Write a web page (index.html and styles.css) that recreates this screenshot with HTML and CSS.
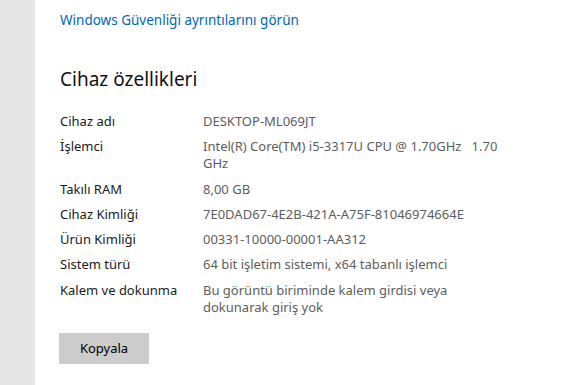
FILE: index.html
```html
<!DOCTYPE html>
<html lang="tr">
<head>
    <meta charset="UTF-8">
    <title>Hakkında</title>
    <link rel="stylesheet" href="styles.css">
</head>
<body>
    <div class="page">
        <div class="sidebar"></div>

        <main class="content">
            <a class="link" href="#">Windows Güvenliği ayrıntılarını görün</a>

            <h2>Cihaz özellikleri</h2>

            <dl class="specs">
                <dt>Cihaz adı</dt>
                <dd>DESKTOP-ML069JT</dd>
                <dt>İşlemci</dt>
                <dd>Intel(R) Core(TM) i5-3317U CPU @ 1.70GHz&nbsp;&nbsp; 1.70 GHz</dd>
                <dt>Takılı RAM</dt>
                <dd>8,00 GB</dd>
                <dt>Cihaz Kimliği</dt>
                <dd>7E0DAD67-4E2B-421A-A75F-81046974664E</dd>
                <dt>Ürün Kimliği</dt>
                <dd>00331-10000-00001-AA312</dd>
                <dt>Sistem türü</dt>
                <dd>64 bit işletim sistemi, x64 tabanlı işlemci</dd>
                <dt>Kalem ve dokunma</dt>
                <dd>Bu görüntü biriminde kalem girdisi veya dokunarak giriş yok</dd>
            </dl>

            <button class="copy">Kopyala</button>
        </main>
    </div>
</body>
</html>
```

FILE: styles.css
```css
body {
    margin: 0;
    font-family: "Noto Sans", "Open Sans", sans-serif;
    font-size: 13px;
    background-color: #fff;
    color: #000;
}
.page {
    display: flex;
    min-height: 385px;
}
.sidebar {
    width: 35px;
    flex-shrink: 0;
    background-color: #e6e6e6;
}
.content {
    padding: 11px 0 0 25px;
}
.link {
    display: block;
    font-size: 13.5px;
    line-height: 18px;
    text-decoration: none;
    color: #0067b8;
}
h2 {
    margin: 37px 0 0;
    font-size: 19px;
    font-weight: normal;
    line-height: 26px;
    color: #111;
}
.specs {
    display: grid;
    grid-template-columns: 143px 300px;
    row-gap: 8.3px;
    margin: 21px 0 0;
    line-height: 17px;
}
.specs dt {
    color: #1a1a1a;
}
.specs dd {
    margin: 0;
    color: #5d5d5d;
}
.copy {
    margin-top: 17px;
    margin-left: -1px;
    width: 90px;
    height: 31px;
    border: none;
    background-color: #cccccc;
    font-family: inherit;
    font-size: 13px;
    color: #000;
}
```
